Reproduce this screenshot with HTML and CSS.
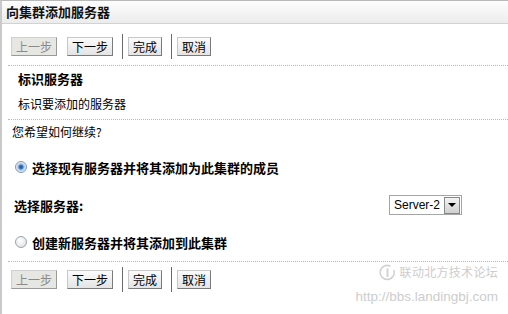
FILE: index.html
```html
<!DOCTYPE html>
<html>
<head>
<meta charset="utf-8">
<link rel="stylesheet" href="styles.css">
</head>
<body>
<div class="panel">
  <div class="header">向集群添加服务器</div>
  <div class="toolbar top">
    <button class="btn disabled">上一步</button>
    <button class="btn">下一步</button>
    <span class="sep"></span>
    <button class="btn">完成</button>
    <span class="sep"></span>
    <button class="btn">取消</button>
  </div>
  <div class="dots"></div>
  <div class="info">
    <div class="info-title">标识服务器</div>
    <div class="info-desc">标识要添加的服务器</div>
  </div>
  <div class="dots"></div>
  <div class="question">您希望如何继续?</div>
  <div class="option first">
    <span class="radio checked"></span>
    <span class="opt-label">选择现有服务器并将其添加为此集群的成员</span>
  </div>
  <div class="select-row">
    <span class="select-label">选择服务器:</span>
    <span class="select">
      <span class="select-text">Server-2</span>
      <span class="select-btn"><span class="arrow"></span></span>
    </span>
  </div>
  <div class="option second">
    <span class="radio"></span>
    <span class="opt-label">创建新服务器并将其添加到此集群</span>
  </div>
  <div class="dots"></div>
  <div class="toolbar bottom">
    <button class="btn disabled">上一步</button>
    <button class="btn">下一步</button>
    <span class="sep"></span>
    <button class="btn">完成</button>
    <span class="sep"></span>
    <button class="btn">取消</button>
  </div>
  <div class="watermark">
    <div class="wm-line1">
      <svg class="wm-logo" width="17" height="17" viewBox="0 0 17 17">
        <path d="M11.5 2.2 A7 7 0 1 0 14.8 6" fill="none" stroke="#d2d2d2" stroke-width="1.6"/>
        <path d="M8.5 4.5 L8.5 13" stroke="#d2d2d2" stroke-width="2"/>
      </svg>
      <span>联动北方技术论坛</span>
    </div>
    <div class="wm-line2">http://bbs.landingbj.com</div>
  </div>
</div>
</body>
</html>
```
FILE: styles.css
```css
html, body {
  margin: 0;
  padding: 0;
  background: #fff;
}
body {
  font-family: "Noto Sans CJK SC", "Liberation Sans", sans-serif;
  font-size: 12px;
  color: #000;
}
.panel {
  width: 508px;
  height: 314px;
  box-sizing: border-box;
  border-left: 2px solid #c9c9c9;
  border-top: 1px solid #b9b9b9;
  position: relative;
  overflow: hidden;
}
.header {
  height: 22px;
  line-height: 22px;
  padding-left: 4px;
  font-size: 13px;
  font-weight: bold;
  color: #111;
  background: linear-gradient(#fdfdfd, #ececec);
  border-bottom: 1px solid #d2d2d2;
}
.toolbar {
  display: flex;
  align-items: center;
  padding-left: 9px;
  height: 26px;
}
.toolbar.top {
  margin-top: 9px;
}
.toolbar.bottom {
  margin-top: 4px;
}
.btn {
  height: 19px;
  padding: 0 4px;
  margin: 0;
  font-family: "Noto Sans CJK SC", sans-serif;
  font-size: 12px;
  line-height: 17px;
  color: #000;
  background: linear-gradient(#fbfbfb, #e4e4e4);
  border: 1px solid;
  border-color: #c8c8c8 #7a7a7a #7a7a7a #c8c8c8;
  border-radius: 0;
}
.btn.disabled {
  color: #8a8a8a;
  background: #e6e6e3;
  border-color: #d0d0d0 #9a9a9a #9a9a9a #d0d0d0;
}
.btn + .btn {
  margin-left: 10px;
}
.sep {
  width: 1px;
  height: 25px;
  background: #6a6a6a;
  margin: 0 5px 0 9px;
}
.dots {
  height: 0;
  margin-left: 6px;
  border-top: 1px dotted #b8b8b8;
}
.toolbar.top + .dots {
  margin-top: 6px;
}
.info {
  padding-left: 16px;
  padding-bottom: 4px;
}
.info-title {
  font-weight: bold;
  font-size: 13px;
  height: 27px;
  line-height: 26px;
}
.info-desc {
  height: 22px;
  line-height: 22px;
}
.question {
  padding-left: 10px;
  height: 24px;
  line-height: 24px;
}
.option {
  display: flex;
  align-items: center;
  padding-left: 13px;
  height: 20px;
}
.option.first {
  margin-top: 13px;
}
.option.second {
  margin-top: 16px;
}
.radio {
  width: 10px;
  height: 10px;
  border-radius: 50%;
  border: 1px solid #9aa3ad;
  background: radial-gradient(circle at 40% 35%, #ffffff, #dcdcdc);
  margin-right: 5px;
}
.radio.checked {
  background: radial-gradient(circle, #1e4f8e 0, #3f7cc4 2px, #a8c6ea 3px, #e8eef6 5px);
  border-color: #7f9ab8;
}
.opt-label {
  font-weight: bold;
  font-size: 13px;
}
.select-row {
  display: flex;
  align-items: center;
  justify-content: space-between;
  padding-left: 12px;
  padding-right: 46px;
  height: 22px;
  margin-top: 17px;
}
.select-label {
  font-weight: bold;
  font-size: 13px;
}
.select {
  display: flex;
  align-items: center;
  height: 18px;
  border: 1px solid #a5a5a5;
  background: #fff;
}
.select-text {
  font-family: "Liberation Sans", Arial, sans-serif;
  font-size: 12px;
  padding: 0 4px 0 4px;
  line-height: 18px;
}
.select-btn {
  width: 14px;
  height: 15px;
  margin-right: 1px;
  border: 1px solid #888;
  background: linear-gradient(#f4f4f4, #cfcfcf);
  display: flex;
  align-items: center;
  justify-content: center;
}
.arrow {
  width: 0;
  height: 0;
  border-left: 4px solid transparent;
  border-right: 4px solid transparent;
  border-top: 4px solid #000;
}
.option.second + .dots {
  margin-top: 9px;
}
.watermark {
  position: absolute;
  right: 10px;
  top: 261px;
  color: #cdcdcd;
  text-align: right;
  line-height: 18px;
}
.wm-line1 {
  display: flex;
  align-items: center;
  justify-content: flex-end;
  font-size: 12px;
  height: 20px;
  letter-spacing: 0.3px;
}
.wm-logo {
  margin-right: 4px;
}
.wm-line2 {
  font-family: "Liberation Sans", Arial, sans-serif;
  font-size: 13.5px;
  margin-top: 6px;
}
```
